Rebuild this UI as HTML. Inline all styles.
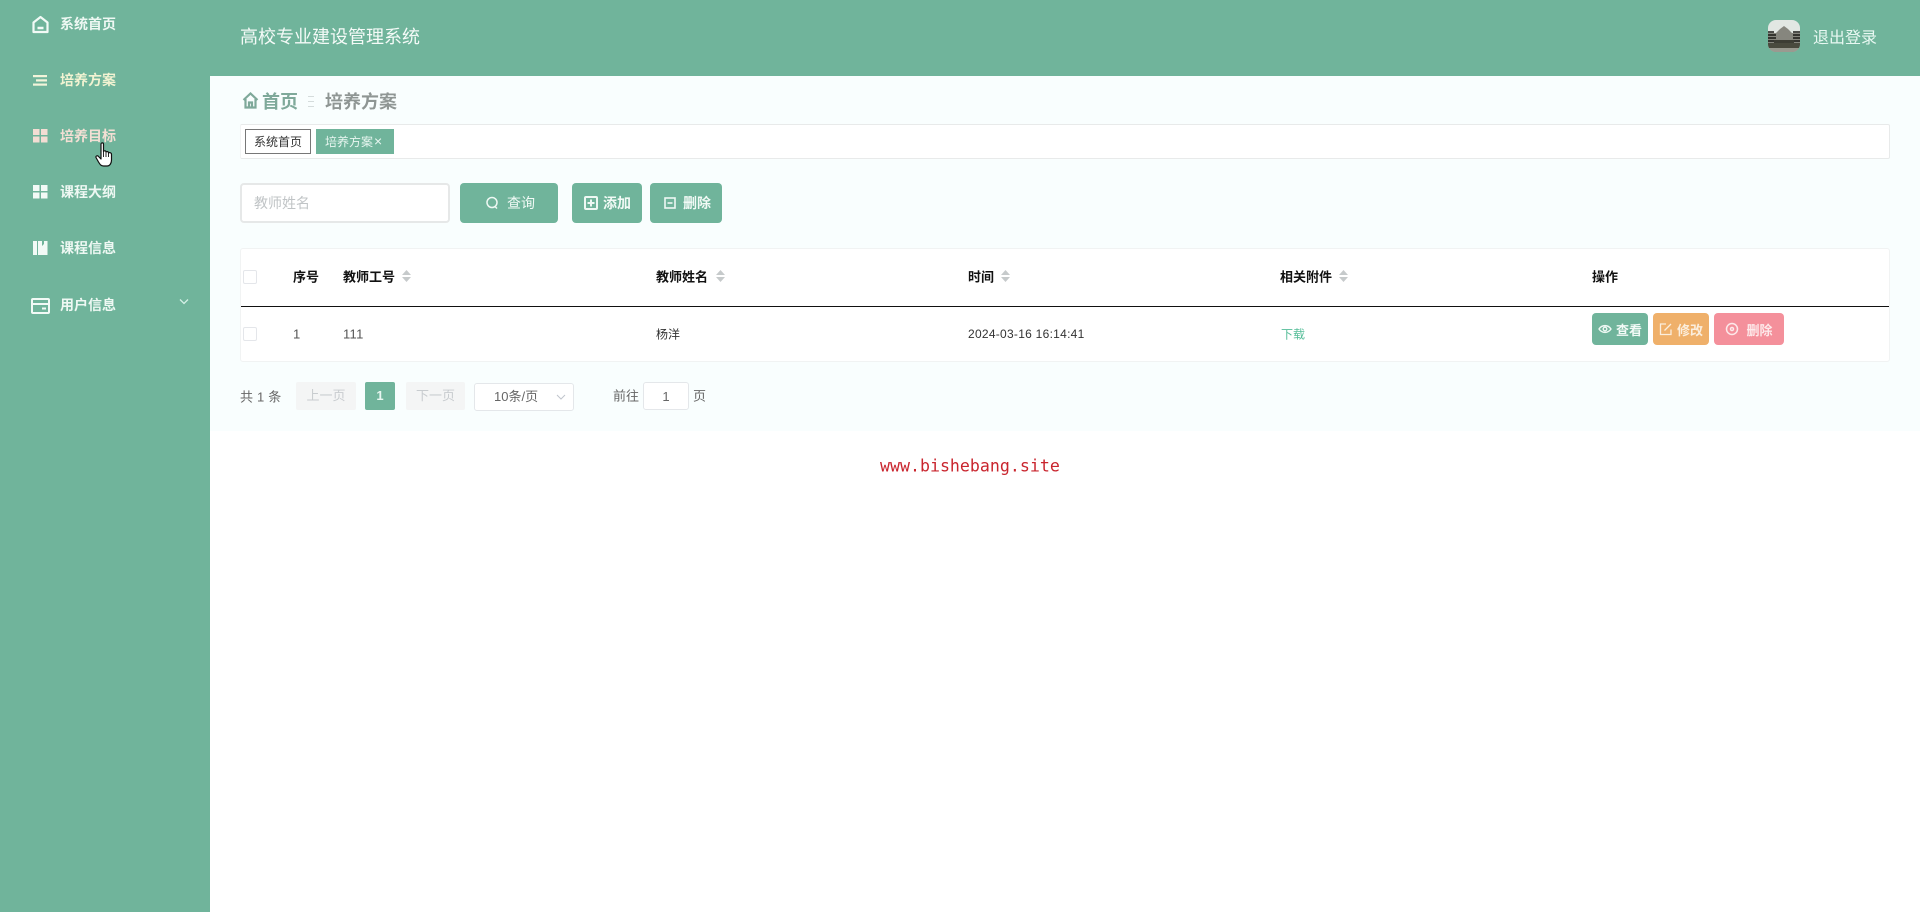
<!DOCTYPE html>
<html lang="zh"><head><meta charset="utf-8"><title>高校专业建设管理系统</title>
<style>
*{box-sizing:border-box}
html,body{margin:0;padding:0;width:1920px;height:912px;overflow:hidden;background:#fff;font-family:"Liberation Sans","Noto Sans CJK SC",sans-serif}
#w{position:absolute;left:0;top:0;width:1920px;height:912px;filter:blur(.35px)}
.a{position:absolute;white-space:nowrap}
.t{position:absolute;white-space:nowrap;transform:translateY(-50%)}
.g{background:#70b49b}
.side{font-size:14px;font-weight:700;color:#eef8f3;left:60px}
.th{font-size:13px;font-weight:700;color:#111}
.td{font-size:12px;color:#333;letter-spacing:.27px}
.btn{position:absolute;border-radius:4px;color:#f2faf6;font-size:13px;font-weight:700;display:flex;align-items:center;justify-content:center;gap:4px;white-space:nowrap}
.cb{position:absolute;width:14px;height:14px;border:1px solid #e4e6ea;background:#fff;border-radius:2px}
.sort{position:absolute;width:9px;height:12px}
</style></head><body><div id="w">
<div class="a g" style="left:0;top:0;width:1920px;height:76px"></div>
<div class="a g" style="left:0;top:0;width:210px;height:912px"></div>
<div class="a" style="left:210px;top:76px;width:1710px;height:355px;background:#f9fefe"></div>

<!-- sidebar icons -->
<svg class="a" style="left:31px;top:15px" width="19" height="19" viewBox="0 0 19 19" fill="none" stroke="#f2faf6" stroke-width="2.200"><path d="M2.500 7.500 9.500 2 16.500 7.500V17H2.500Z" stroke-linejoin="round"/><path d="M6.500 13h6" stroke-width="2.500"/></svg>
<svg class="a" style="left:33px;top:75px" width="15" height="11" viewBox="0 0 15 11" fill="#f2f4da"><rect x="0" y="0" width="14" height="2.200"/><rect x="3" y="4.300" width="11" height="2.200"/><rect x="0" y="8.500" width="14" height="2.200"/></svg>
<svg class="a" style="left:33px;top:129px" width="15" height="14" viewBox="0 0 15 14" fill="#f3ddd3"><rect width="6.500" height="6"/><rect x="8" width="6.500" height="6"/><rect y="7.500" width="6.500" height="6"/><rect x="8" y="7.500" width="6.500" height="6"/></svg>
<svg class="a" style="left:33px;top:185px" width="15" height="14" viewBox="0 0 15 14" fill="#f2faf6"><rect width="6.500" height="6"/><rect x="8" width="6.500" height="6"/><rect y="7.500" width="6.500" height="6"/><rect x="8" y="7.500" width="6.500" height="6"/></svg>
<svg class="a" style="left:33px;top:241px" width="15" height="14" viewBox="0 0 15 14" fill="#f2faf6"><path d="M0 0H4V14H0ZM5 0H9V5L10.500 3.500 11 3V0H14.500V14H5Z"/></svg>
<svg class="a" style="left:31px;top:298px" width="19" height="16" viewBox="0 0 19 16" fill="none" stroke="#f2faf6" stroke-width="2"><rect x="1" y="1" width="17" height="14" rx="1"/><path d="M1 6H18M11 10.500H15"/></svg>

<div class="t side" style="top:24px">系统首页</div>
<div class="t side" style="top:80px;color:#f2f3d2">培养方案</div>
<div class="t side" style="top:136px;color:#f3dfd4">培养目标</div>
<div class="t side" style="top:192px">课程大纲</div>
<div class="t side" style="top:248px">课程信息</div>
<div class="t side" style="top:305px">用户信息</div>
<svg class="a" style="left:178px;top:298px" width="12" height="8" viewBox="0 0 12 8" fill="none" stroke="#d5f0e6" stroke-width="1.300"><path d="M2 1.500 6 5.500 10 1.500"/></svg>

<!-- cursor -->
<svg class="a" style="left:95px;top:142px" width="20" height="26" viewBox="0 0 20 26"><path d="M6 2C6 .5 8.500.5 8.500 2V9.500C9 8.500 11 8.500 11 10 11.500 9.300 13.500 9.300 13.500 11 14 10.300 16.500 10.500 16.500 12.500V18C16.500 21 15 24 12 24H8.500C6 24 5 22.500 3.500 20L1 15.500C.5 14 2.500 13 3.500 14.500L6 17Z" fill="#fff" stroke="#111" stroke-width="1.200" stroke-linejoin="round"/><path d="M8.500 10V15M11 10V15M13.500 11V15" stroke="#111" stroke-width=".9" fill="none"/></svg>

<!-- header -->
<div class="t" style="left:240px;top:36px;font-size:18px;color:#f4faf7">高校专业建设管理系统</div>
<svg class="a" style="left:1768px;top:20px" width="32" height="32" viewBox="0 0 32 32"><defs><clipPath id="c"><rect width="32" height="32" rx="8"/></clipPath></defs><g clip-path="url(#c)"><rect width="32" height="32" fill="#e2e7e3"/><path d="M0 13H8L12 9 16 6 20 9 24 13H32V32H0Z" fill="#86867e"/><path d="M0 12H6M0 15H8M0 18H8M0 21H8M25 12H32M25 15H32M25 18H32M25 21H32" stroke="#1a1a17" stroke-width="1.400"/><rect x="6" y="20" width="20" height="7" fill="#3d3d34"/><rect y="23" width="32" height="5" fill="#4a4a3e"/><rect y="28" width="32" height="4" fill="#9a9a90"/></g></svg>
<div class="t" style="left:1813px;top:36px;font-size:16px;color:#e8f8f2">退出登录</div>

<!-- breadcrumb -->
<svg class="a" style="left:242px;top:92px" width="17" height="17" viewBox="0 0 17 17" fill="none" stroke="#7fa99a" stroke-width="2.200"><path d="M1.500 8 8.500 1.500 15.500 8M3.500 7V15.500H13.500V7M7 15.500V10.500H10V15.500"/></svg>
<div class="t" style="left:262px;top:101px;font-size:18px;font-weight:700;color:#7fa99a">首页</div>
<div class="a" style="left:308px;top:96px;width:6px;height:11px;border-top:1px solid #d5dcdc;border-bottom:1px solid #d5dcdc"><div style="margin-top:4px;height:1px;background:#d5dcdc"></div></div>
<div class="t" style="left:325px;top:101px;font-size:18px;font-weight:700;color:#8f9694">培养方案</div>

<!-- tabs -->
<div class="a" style="left:240px;top:124px;width:1650px;height:35px;background:#fff;border:1px solid #e8eaea;border-left-color:#f2f4f4;border-radius:2px"></div>
<div class="a" style="left:245px;top:129px;width:66px;height:25px;border:1px solid #777;background:#fff;font-size:12px;color:#333;text-align:center;line-height:24px">系统首页</div>
<div class="a g" style="left:316px;top:129px;width:78px;height:25px;font-size:12px;color:#e8f6f0;line-height:25px;padding-left:9px">培养方案<span style="font-size:14px;margin-left:1px">×</span></div>

<!-- search -->
<div class="a" style="left:240px;top:183px;width:210px;height:40px;background:#fff;border:2px solid #e6e8e8;border-radius:4px;font-size:14px;color:#c0c4c6;line-height:36px;padding-left:12px">教师姓名</div>
<div class="btn g" style="left:460px;top:183px;width:98px;height:40px;font-weight:400;font-size:14px;gap:8px;padding-left:2px">
<svg width="14" height="14" viewBox="0 0 14 14" fill="none" stroke="#eef8f3" stroke-width="1.500"><circle cx="7" cy="6.500" r="5"/><path d="M10 10.500 12 12.500"/></svg>查询</div>
<div class="btn g" style="left:572px;top:183px;width:70px;height:40px;font-size:14px;gap:5px;padding-left:1px">
<svg width="14" height="14" viewBox="0 0 14 14" fill="none" stroke="#eef8f3" stroke-width="2"><rect x="1" y="1" width="12" height="12" rx="1"/><path d="M7 3.500V10.500M3.500 7H10.500"/></svg>添加</div>
<div class="btn g" style="left:650px;top:183px;width:72px;height:40px;font-size:14px;gap:7px;padding-left:3px">
<svg width="12" height="12" viewBox="0 0 12 12" fill="none" stroke="#eef8f3" stroke-width="1.600"><rect x="1" y="1" width="10" height="10"/><path d="M3.500 6H8.500"/></svg>删除</div>

<!-- table -->
<div class="a" style="left:240px;top:248px;width:1650px;height:114px;background:#fff;border:1px solid #f1f3f3;border-radius:3px"></div>
<div class="a" style="left:241px;top:306px;width:1648px;height:1px;background:#111"></div>
<div class="cb" style="left:243px;top:270px"></div>
<div class="cb" style="left:243px;top:327px"></div>
<div class="t th" style="left:293px;top:276px">序号</div>
<div class="t th" style="left:343px;top:276px">教师工号</div>
<div class="t th" style="left:656px;top:276px">教师姓名</div>
<div class="t th" style="left:968px;top:276px">时间</div>
<div class="t th" style="left:1280px;top:276px">相关附件</div>
<div class="t th" style="left:1592px;top:276px">操作</div>
<svg class="sort" style="left:402px;top:270px" viewBox="0 0 9 12" fill="#c6cacb"><path d="M4.500 0 9 5H0ZM4.500 12 0 7H9Z"/></svg>
<svg class="sort" style="left:716px;top:270px" viewBox="0 0 9 12" fill="#c6cacb"><path d="M4.500 0 9 5H0ZM4.500 12 0 7H9Z"/></svg>
<svg class="sort" style="left:1001px;top:270px" viewBox="0 0 9 12" fill="#c6cacb"><path d="M4.500 0 9 5H0ZM4.500 12 0 7H9Z"/></svg>
<svg class="sort" style="left:1339px;top:270px" viewBox="0 0 9 12" fill="#c6cacb"><path d="M4.500 0 9 5H0ZM4.500 12 0 7H9Z"/></svg>
<div class="t td" style="left:293px;top:334px;color:#555;font-size:13px">1</div>
<div class="t td" style="left:343px;top:334px;color:#555;font-size:13px">111</div>
<div class="t td" style="left:656px;top:334px;letter-spacing:0">杨洋</div>
<div class="t td" style="left:968px;top:334px">2024-03-16 16:14:41</div>
<div class="t td" style="left:1281px;top:334px;color:#55bd98;letter-spacing:0">下载</div>

<div class="btn g" style="left:1592px;top:313px;width:56px;height:32px;gap:4px">
<svg width="14" height="10" viewBox="0 0 14 10" fill="none" stroke="#eef8f3" stroke-width="1.400"><path d="M1 5C4 .5 10 .5 13 5 10 9.500 4 9.500 1 5Z"/><circle cx="7" cy="5" r="1.800"/></svg>查看</div>
<div class="btn" style="left:1653px;top:313px;width:56px;height:32px;background:#efb06a;gap:4px;color:#fbeedd">
<svg width="14" height="14" viewBox="0 0 14 14" fill="none" stroke="#fbeedd" stroke-width="1.300"><path d="M12 7.500V12.500H1.500V2H7M5.500 8.500 12 2"/></svg>修改</div>
<div class="btn" style="left:1714px;top:313px;width:70px;height:32px;background:#f4909b;gap:7px;color:#fde9ea">
<svg width="14" height="14" viewBox="0 0 14 14" fill="none" stroke="#fde9ea" stroke-width="1.500"><circle cx="7" cy="7" r="5.500"/><circle cx="7" cy="7" r="1.500"/></svg>删除</div>

<!-- pagination -->
<div class="t" style="left:240px;top:396px;font-size:13px;color:#666;letter-spacing:.2px">共 1 条</div>
<div class="a" style="left:296px;top:382px;width:60px;height:28px;background:#f4f5f5;border-radius:2px;font-size:13px;color:#c8cccf;text-align:center;line-height:27px">上一页</div>
<div class="a g" style="left:365px;top:382px;width:30px;height:28px;border-radius:2px;font-size:13px;font-weight:700;color:#e8f6f0;text-align:center;line-height:28px">1</div>
<div class="a" style="left:406px;top:382px;width:59px;height:28px;background:#f4f5f5;border-radius:2px;font-size:13px;color:#c8cccf;text-align:center;line-height:27px">下一页</div>
<div class="a" style="left:474px;top:383px;width:100px;height:28px;background:#fff;border:1px solid #e4e7ea;border-radius:3px;font-size:13px;color:#666;line-height:25px;padding-left:19px">10条/页</div>
<svg class="a" style="left:556px;top:394px" width="10" height="7" viewBox="0 0 10 7" fill="none" stroke="#c0c4cc"><path d="M1 1 5 5 9 1"/></svg>
<div class="t" style="left:613px;top:395px;font-size:13px;color:#666">前往</div>
<div class="a" style="left:643px;top:382px;width:46px;height:28px;background:#fff;border:1px solid #e4e7ea;border-radius:3px;font-size:13px;color:#666;text-align:center;line-height:27px">1</div>
<div class="t" style="left:693px;top:395px;font-size:13px;color:#666">页</div>

<div class="t" style="left:880px;top:466px;font-family:'DejaVu Sans Mono',monospace;font-size:16.600px;color:#c9252e">www.bishebang.site</div>
</div></body></html>
